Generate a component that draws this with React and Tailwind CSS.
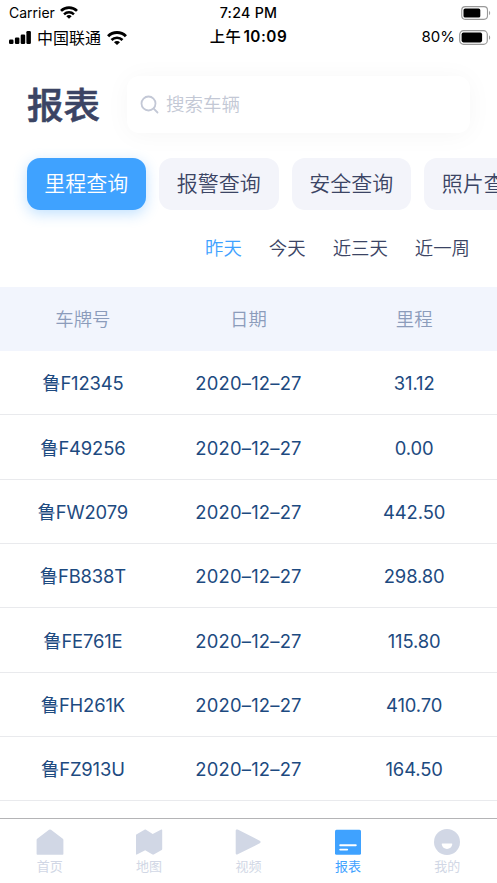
import clsx from 'clsx';

const categories = ['里程查询', '报警查询', '安全查询', '照片查询'];

const ranges = ['昨天', '今天', '近三天', '近一周'];

const records = [
  { plate: '鲁F12345', date: '2020–12–27', mileage: '31.12' },
  { plate: '鲁F49256', date: '2020–12–27', mileage: '0.00' },
  { plate: '鲁FW2079', date: '2020–12–27', mileage: '442.50' },
  { plate: '鲁FB838T', date: '2020–12–27', mileage: '298.80' },
  { plate: '鲁FE761E', date: '2020–12–27', mileage: '115.80' },
  { plate: '鲁FH261K', date: '2020–12–27', mileage: '410.70' },
  { plate: '鲁FZ913U', date: '2020–12–27', mileage: '164.50' },
];

const tabs = [
  { label: '首页', icon: HomeIcon },
  { label: '地图', icon: MapIcon },
  { label: '视频', icon: VideoIcon },
  { label: '报表', icon: ReportIcon, active: true },
  { label: '我的', icon: ProfileIcon },
];

function HomeIcon() {
  return (
    <svg viewBox="0 0 28 26" className="h-[26px] w-7" fill="currentColor">
      <path d="M13 .8a1.700 1.700 0 0 1 2 0l11.800 9c.4.3.6.7.6 1.200v14c0 .5-.3.8-.8.8H1.400c-.5 0-.8-.3-.8-.8V11c0-.5.2-.9.600-1.200z" />
    </svg>
  );
}

function MapIcon() {
  return (
    <svg viewBox="0 0 28 26" className="h-[26px] w-7" fill="currentColor">
      <path d="M1.300 5.400 9.500.8c.5-.3 1-.3 1.500 0l6.700 4.300L26.300.6c.5-.3.9 0 .9.500v18.900c0 .4-.2.700-.5.900l-8 4.600c-.4.2-.8.2-1.200 0l-7.300-4.200-8.300 4.300c-.5.3-.9 0-.9-.500V6.200c0-.4.100-.6.300-.8z" />
    </svg>
  );
}

function VideoIcon() {
  return (
    <svg viewBox="0 0 28 26" className="h-[26px] w-7" fill="currentColor">
      <path d="M1.700 1.800C1.700.6 2.600.1 3.700.600l22 11.100c1.200.6 1.200 2 0 2.600l-22 11c-1.100.6-2 0-2-1.100z" />
    </svg>
  );
}

function ReportIcon() {
  return (
    <svg viewBox="0 0 28 26" className="h-[26px] w-7" fill="currentColor">
      <rect x="1" y=".7" width="26" height="25" rx="1.500" />
      <path d="M6.200 16.200h15.600M6.200 20.600h7" stroke="#fff" strokeWidth="1.900" strokeLinecap="round" />
    </svg>
  );
}

function ProfileIcon() {
  return (
    <svg viewBox="0 0 28 26" className="h-[26px] w-7" fill="currentColor">
      <circle cx="14" cy="13" r="13" />
      <path d="M9.300 14.500h9.400c.5 0 .7.300.6.800-.5 2.800-2.600 4.700-5.300 4.700s-4.800-1.900-5.300-4.700c-.1-.5.100-.8.6-.8z" fill="#fff" />
    </svg>
  );
}

function WifiIcon({ className }) {
  return (
    <svg viewBox="0 0 20 14" className={className} fill="none" stroke="#000" strokeWidth="3">
      <path d="M1.100 5.200a12.600 12.600 0 0 1 17.800 0" />
      <path d="M4.500 9a7.800 7.800 0 0 1 11 0" strokeWidth="2.700" />
      <path d="M7 11.200a4.200 4.200 0 0 1 6 0L10 14z" fill="#000" stroke="none" />
    </svg>
  );
}

function SignalIcon() {
  return (
    <svg viewBox="0 0 22 14" className="h-3.5 w-[22px]" fill="#000">
      <rect x="0" y="8.500" width="4.500" height="4.500" rx="1.200" />
      <rect x="5.900" y="6.500" width="4.500" height="6.500" rx="1.200" />
      <rect x="11.700" y="3.500" width="4.500" height="9.500" rx="1.200" />
      <rect x="17.400" y="0" width="4.500" height="13" rx="1.200" />
    </svg>
  );
}

function BatteryIcon({ className, level }) {
  return (
    <svg viewBox="0 0 32 15" className={className}>
      <rect x=".7" y=".7" width="27.600" height="13.600" rx="3.800" fill="none" stroke="#999" strokeWidth="1.200" />
      <rect x="2.600" y="2.600" width={level} height="9.800" rx="1.800" fill="#000" />
      <path d="M30 5.200c1.600.8 1.600 3.800 0 4.600z" fill="#999" />
    </svg>
  );
}

function StatusBars() {
  return (
    <div className="text-black">
      <div className="grid h-[25px] grid-cols-3 items-center pr-[6px] pl-[9px] text-[14px]">
        <div className="flex items-center gap-[5px]">
          <span>Carrier</span>
          <WifiIcon className="h-[13px] w-[18px]" />
        </div>
        <div className="pr-[3px] text-center text-[14.2px] font-medium tracking-[0.3px]">7:24 PM</div>
        <BatteryIcon className="h-[14px] w-[30px] justify-self-end" level={18} />
      </div>
      <div className="grid h-[25px] grid-cols-3 items-center pr-[6px] pl-[9px] text-[15px]">
        <div className="flex items-center gap-[6px]">
          <SignalIcon />
          <span className="text-[16px]">中国联通</span>
          <WifiIcon className="h-[14px] w-5" />
        </div>
        <div className="flex items-center justify-center gap-[2px] pr-[3px] text-[15.3px] font-medium tracking-[0.5px]">
          <span>上午</span>
          <span className="font-semibold">10:09</span>
        </div>
        <div className="flex items-center justify-end gap-[4px]">
          <span>80%</span>
          <BatteryIcon className="h-[15px] w-8" level={20.5} />
        </div>
      </div>
    </div>
  );
}

function SearchBox() {
  return (
    <div className="flex h-[57px] w-[343px] items-center gap-[7px] rounded-xl bg-white pl-[13px] text-[18.5px] font-[350] text-[#c3c8d5] shadow-[0_2px_26px_rgba(0,0,0,0.04)]">
      <svg viewBox="0 0 19 19" className="size-[19px]" fill="none" stroke="#c3c8d6" strokeWidth="1.800" strokeLinecap="round">
        <circle cx="8.500" cy="8.500" r="7" />
        <path d="m13.700 13.700 3.800 3.800" />
      </svg>
      <span className="pt-px">搜索车辆</span>
    </div>
  );
}

export default function App() {
  return (
    <div className="flex h-[883px] w-[497px] flex-col overflow-hidden bg-white font-[Inter,'Noto_Sans_CJK_SC',sans-serif]">
      <StatusBars />

      {/* Title and search */}
      <div className="mt-[26px] flex h-[57px] shrink-0 items-center justify-between pr-[27px] pl-[27px]">
        <h1 className="pt-[3px] text-[36.5px] leading-none font-medium text-[#3b4464] [-webkit-text-stroke:0.6px_#3b4464]">报表</h1>
        <SearchBox />
      </div>

      {/* Query categories */}
      <div className="mt-[25px] flex shrink-0 gap-[13px] pl-[26.5px]">
        {categories.map((name, index) => (
          <div
            key={name}
            className={clsx(
              'flex h-[52px] w-[119.5px] shrink-0 items-center justify-center rounded-[13px] pb-[2px] text-[21px] leading-none font-[350]',
              index === 0
                ? 'bg-[#3fa2ff] text-white shadow-[0_4px_14px_rgba(63,162,255,0.32)]'
                : 'bg-[#f3f4fa] text-[#3b4464]'
            )}
          >
            {name}
          </div>
        ))}
      </div>

      {/* Date ranges */}
      <div className="flex h-[77px] shrink-0 items-center justify-end gap-[27px] pt-px pr-[27px] text-[18.4px] font-[350] text-[#3b4464]">
        {ranges.map((name, index) => (
          <span key={name} className={clsx(index === 0 && 'text-[#3fa2ff]')}>
            {name}
          </span>
        ))}
      </div>

      {/* Mileage table */}
      <div className="grid h-16 shrink-0 grid-cols-3 items-center bg-[#f2f5fd] pt-[2px] text-center text-[18.4px] font-[350] text-[#8c9cbb]">
        <span>车牌号</span>
        <span>日期</span>
        <span>里程</span>
      </div>
      {records.map((row) => (
        <div
          key={row.plate}
          className="grid h-[64.35px] shrink-0 grid-cols-3 items-center border-b border-[#e9eaed] pt-[3px] text-center text-[18.4px] text-[#1d4a80]"
        >
          <span className="tracking-[-0.15px]">{row.plate}</span>
          <span className="tracking-[0.2px]">{row.date}</span>
          <span className="tracking-[-0.1px]">{row.mileage}</span>
        </div>
      ))}

      {/* Bottom tabs */}
      <div className="mt-auto grid h-[65px] shrink-0 grid-cols-5 border-t border-[#b4b4b6] pt-[10px]">
        {tabs.map(({ label, icon: Icon, active }) => (
          <div
            key={label}
            className={clsx(
              'flex flex-col items-center gap-[3px] text-[13px] leading-4',
              active ? 'text-[#3fa2ff]' : 'text-[#d1d7e5]'
            )}
          >
            <Icon />
            <span>{label}</span>
          </div>
        ))}
      </div>
    </div>
  );
}
